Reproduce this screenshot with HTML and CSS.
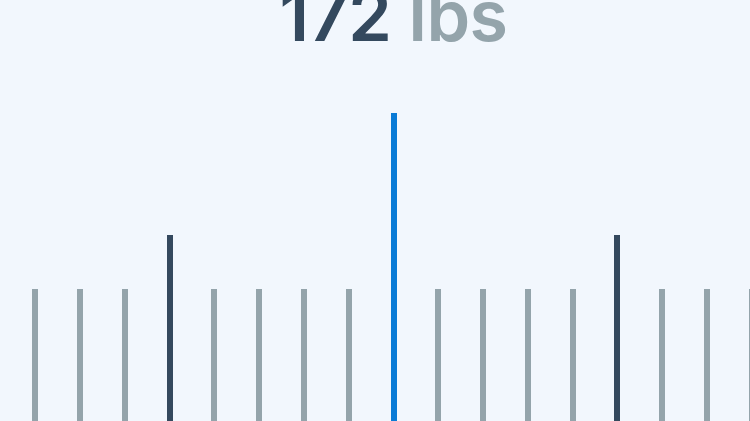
FILE: index.html
```html
<!DOCTYPE html>
<html lang="en">
<head>
    <meta charset="UTF-8">
    <meta name="viewport" content="width=device-width, initial-scale=1.0">
    <title>Peso</title>
    <link rel="stylesheet" href="styles.css">
</head>
<body>
    <div class="weight-picker">
        <h1 class="weight-value">172 <span class="unit">lbs</span></h1>
        <div class="ruler">
            <span class="tick major"></span>
            <span class="tick"></span>
            <span class="tick"></span>
            <span class="tick"></span>
            <span class="tick"></span>
            <span class="tick major"></span>
            <span class="tick"></span>
            <span class="tick"></span>
            <span class="tick"></span>
            <span class="tick"></span>
            <span class="tick current"></span>
            <span class="tick"></span>
            <span class="tick"></span>
            <span class="tick"></span>
            <span class="tick"></span>
            <span class="tick major"></span>
            <span class="tick"></span>
            <span class="tick"></span>
            <span class="tick"></span>
            <span class="tick"></span>
            <span class="tick major"></span>
        </div>
    </div>
</body>
</html>
```

FILE: styles.css
```css
body {
    font-family: Inter, "Noto Sans", sans-serif;
    background-color: #f2f7fd;
    margin: 0;
    padding: 0;
    height: 100vh;
    overflow: hidden;
}

.weight-picker {
    display: flex;
    flex-direction: column;
    height: 100%;
    padding-left: 37px;
}

.weight-value {
    margin: -19px 0 0;
    font-size: 70px;
    font-weight: 600;
    line-height: 70px;
    letter-spacing: -0.5px;
    text-align: center;
    color: #34495e;
}

.unit {
    color: #94a4ab;
}

.ruler {
    flex: 1;
    display: flex;
    align-items: flex-end;
    justify-content: center;
    gap: 38.8px;
    margin-bottom: -4px;
}

.tick {
    flex: none;
    width: 6px;
    height: 136px;
    background-color: #94a4ab;
}

.tick.major {
    height: 190px;
    background-color: #34495e;
}

.tick.current {
    height: 312px;
    background-color: #0a7bd6;
}
```
